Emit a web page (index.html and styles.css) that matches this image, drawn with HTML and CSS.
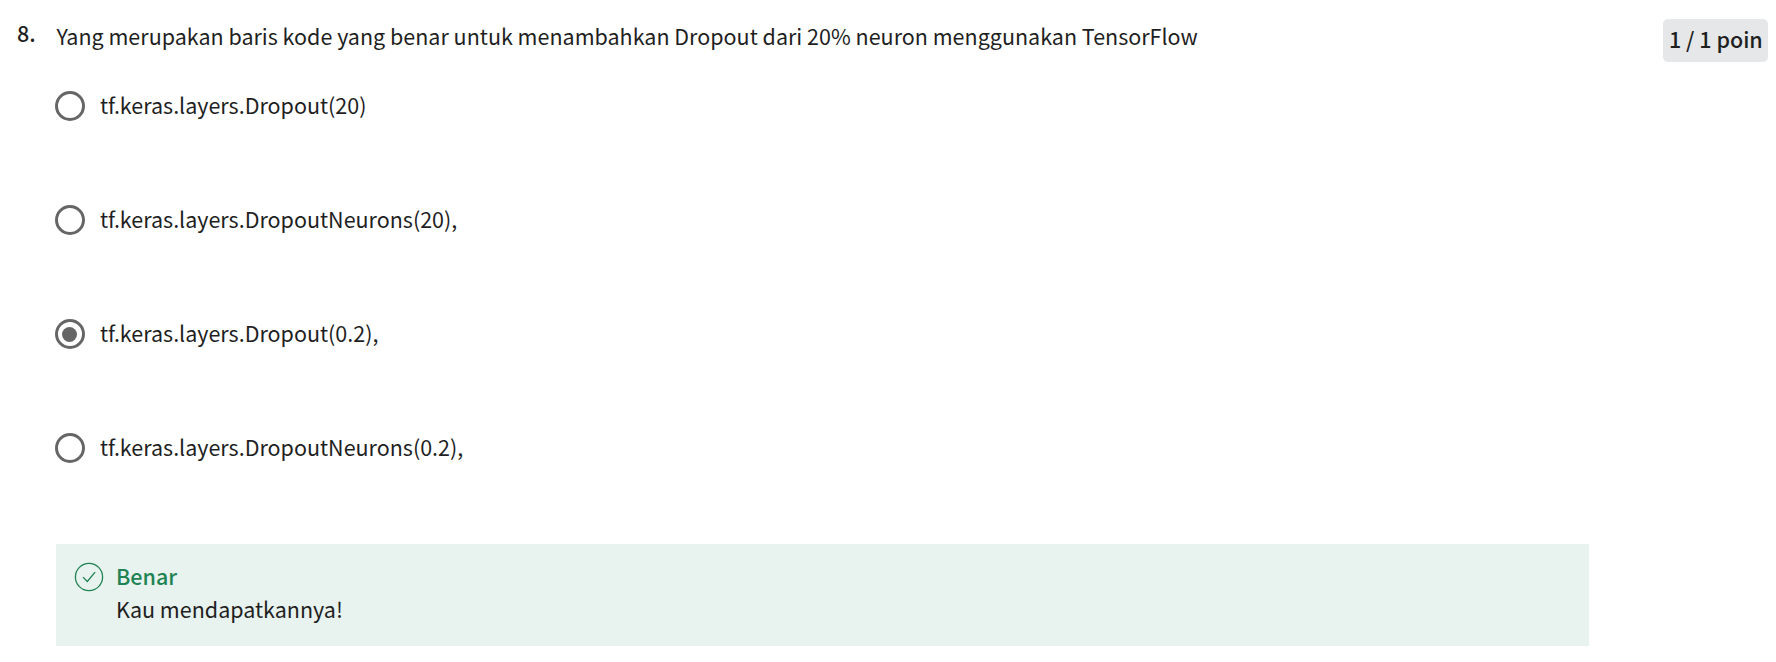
FILE: index.html
```html
<!DOCTYPE html>
<html lang="id">
<head>
<meta charset="utf-8">
<title>Kuis</title>
<link rel="stylesheet" href="styles.css">
</head>
<body>
<main class="question">
  <div class="number">8.</div>
  <div class="content">
    <div class="prompt"><span>Yang merupakan baris kode yang benar untuk menambahkan Dropout dari 20% neuron menggunakan TensorFlow</span></div>
    <div class="options">
      <div class="option"><span class="radio"></span><span class="label">tf.keras.layers.Dropout(20)</span></div>
      <div class="option"><span class="radio"></span><span class="label">tf.keras.layers.DropoutNeurons(20),</span></div>
      <div class="option"><span class="radio checked"></span><span class="label">tf.keras.layers.Dropout(0.2),</span></div>
      <div class="option"><span class="radio"></span><span class="label">tf.keras.layers.DropoutNeurons(0.2),</span></div>
    </div>
    <div class="feedback">
      <svg class="check" width="30" height="30" viewBox="0 0 30 30" fill="none" stroke="#1f8354"><circle cx="15" cy="15" r="13.6" stroke-width="1.3"/><path d="M9 15.1l4.3 4.4 7.8-9.4" stroke-width="1.3"/></svg>
      <div class="message">
        <strong class="verdict">Benar</strong>
        <span class="detail">Kau mendapatkannya!</span>
      </div>
    </div>
  </div>
  <div class="points">1 / 1 poin</div>
</main>
</body>
</html>
```
FILE: styles.css
```css
body {
  margin: 0;
  background: #fff;
  color: #1f1f1f;
  font-family: "Noto Sans CJK SC", "Noto Sans", sans-serif;
  font-size: 21.5px;
  line-height: 33px;
}

.question {
  display: flex;
  align-items: flex-start;
  box-sizing: border-box;
  width: 1776px;
  height: 662px;
  padding: 19px 8px 0 17px;
}

.number {
  width: 39px;
  margin-top: -3px;
  font-weight: 500;
}

.content {
  width: 1533px;
}

.prompt {
  height: 68px;
  padding-left: 0.5px;
  box-sizing: border-box;
  white-space: nowrap;
}

.options {
  display: grid;
  grid-auto-rows: 38px;
  row-gap: 76px;
  padding-bottom: 77px;
}

.option {
  display: flex;
  align-items: center;
  gap: 15.5px;
  margin-left: -1.5px;
  white-space: nowrap;
}

.label {
  padding-bottom: 4px;
}

.radio {
  display: grid;
  place-items: center;
  box-sizing: border-box;
  width: 30px;
  height: 30px;
  border: 3px solid #666;
  border-radius: 50%;
}

.checked::after {
  content: "";
  width: 15px;
  height: 15px;
  border-radius: 50%;
  background: #666;
}

.feedback {
  display: flex;
  gap: 12px;
  box-sizing: border-box;
  height: 102px;
  padding: 18px;
  background: #e8f2ee;
}

.message {
  display: flex;
  flex-direction: column;
  margin-top: -3px;
}

.verdict {
  color: #1f8354;
  font-weight: 500;
}

.points {
  box-sizing: border-box;
  width: 105px;
  height: 43px;
  margin-left: auto;
  padding: 3px 6px;
  border-radius: 5px;
  background: #e5e7e8;
  font-weight: 500;
  white-space: nowrap;
}
```
